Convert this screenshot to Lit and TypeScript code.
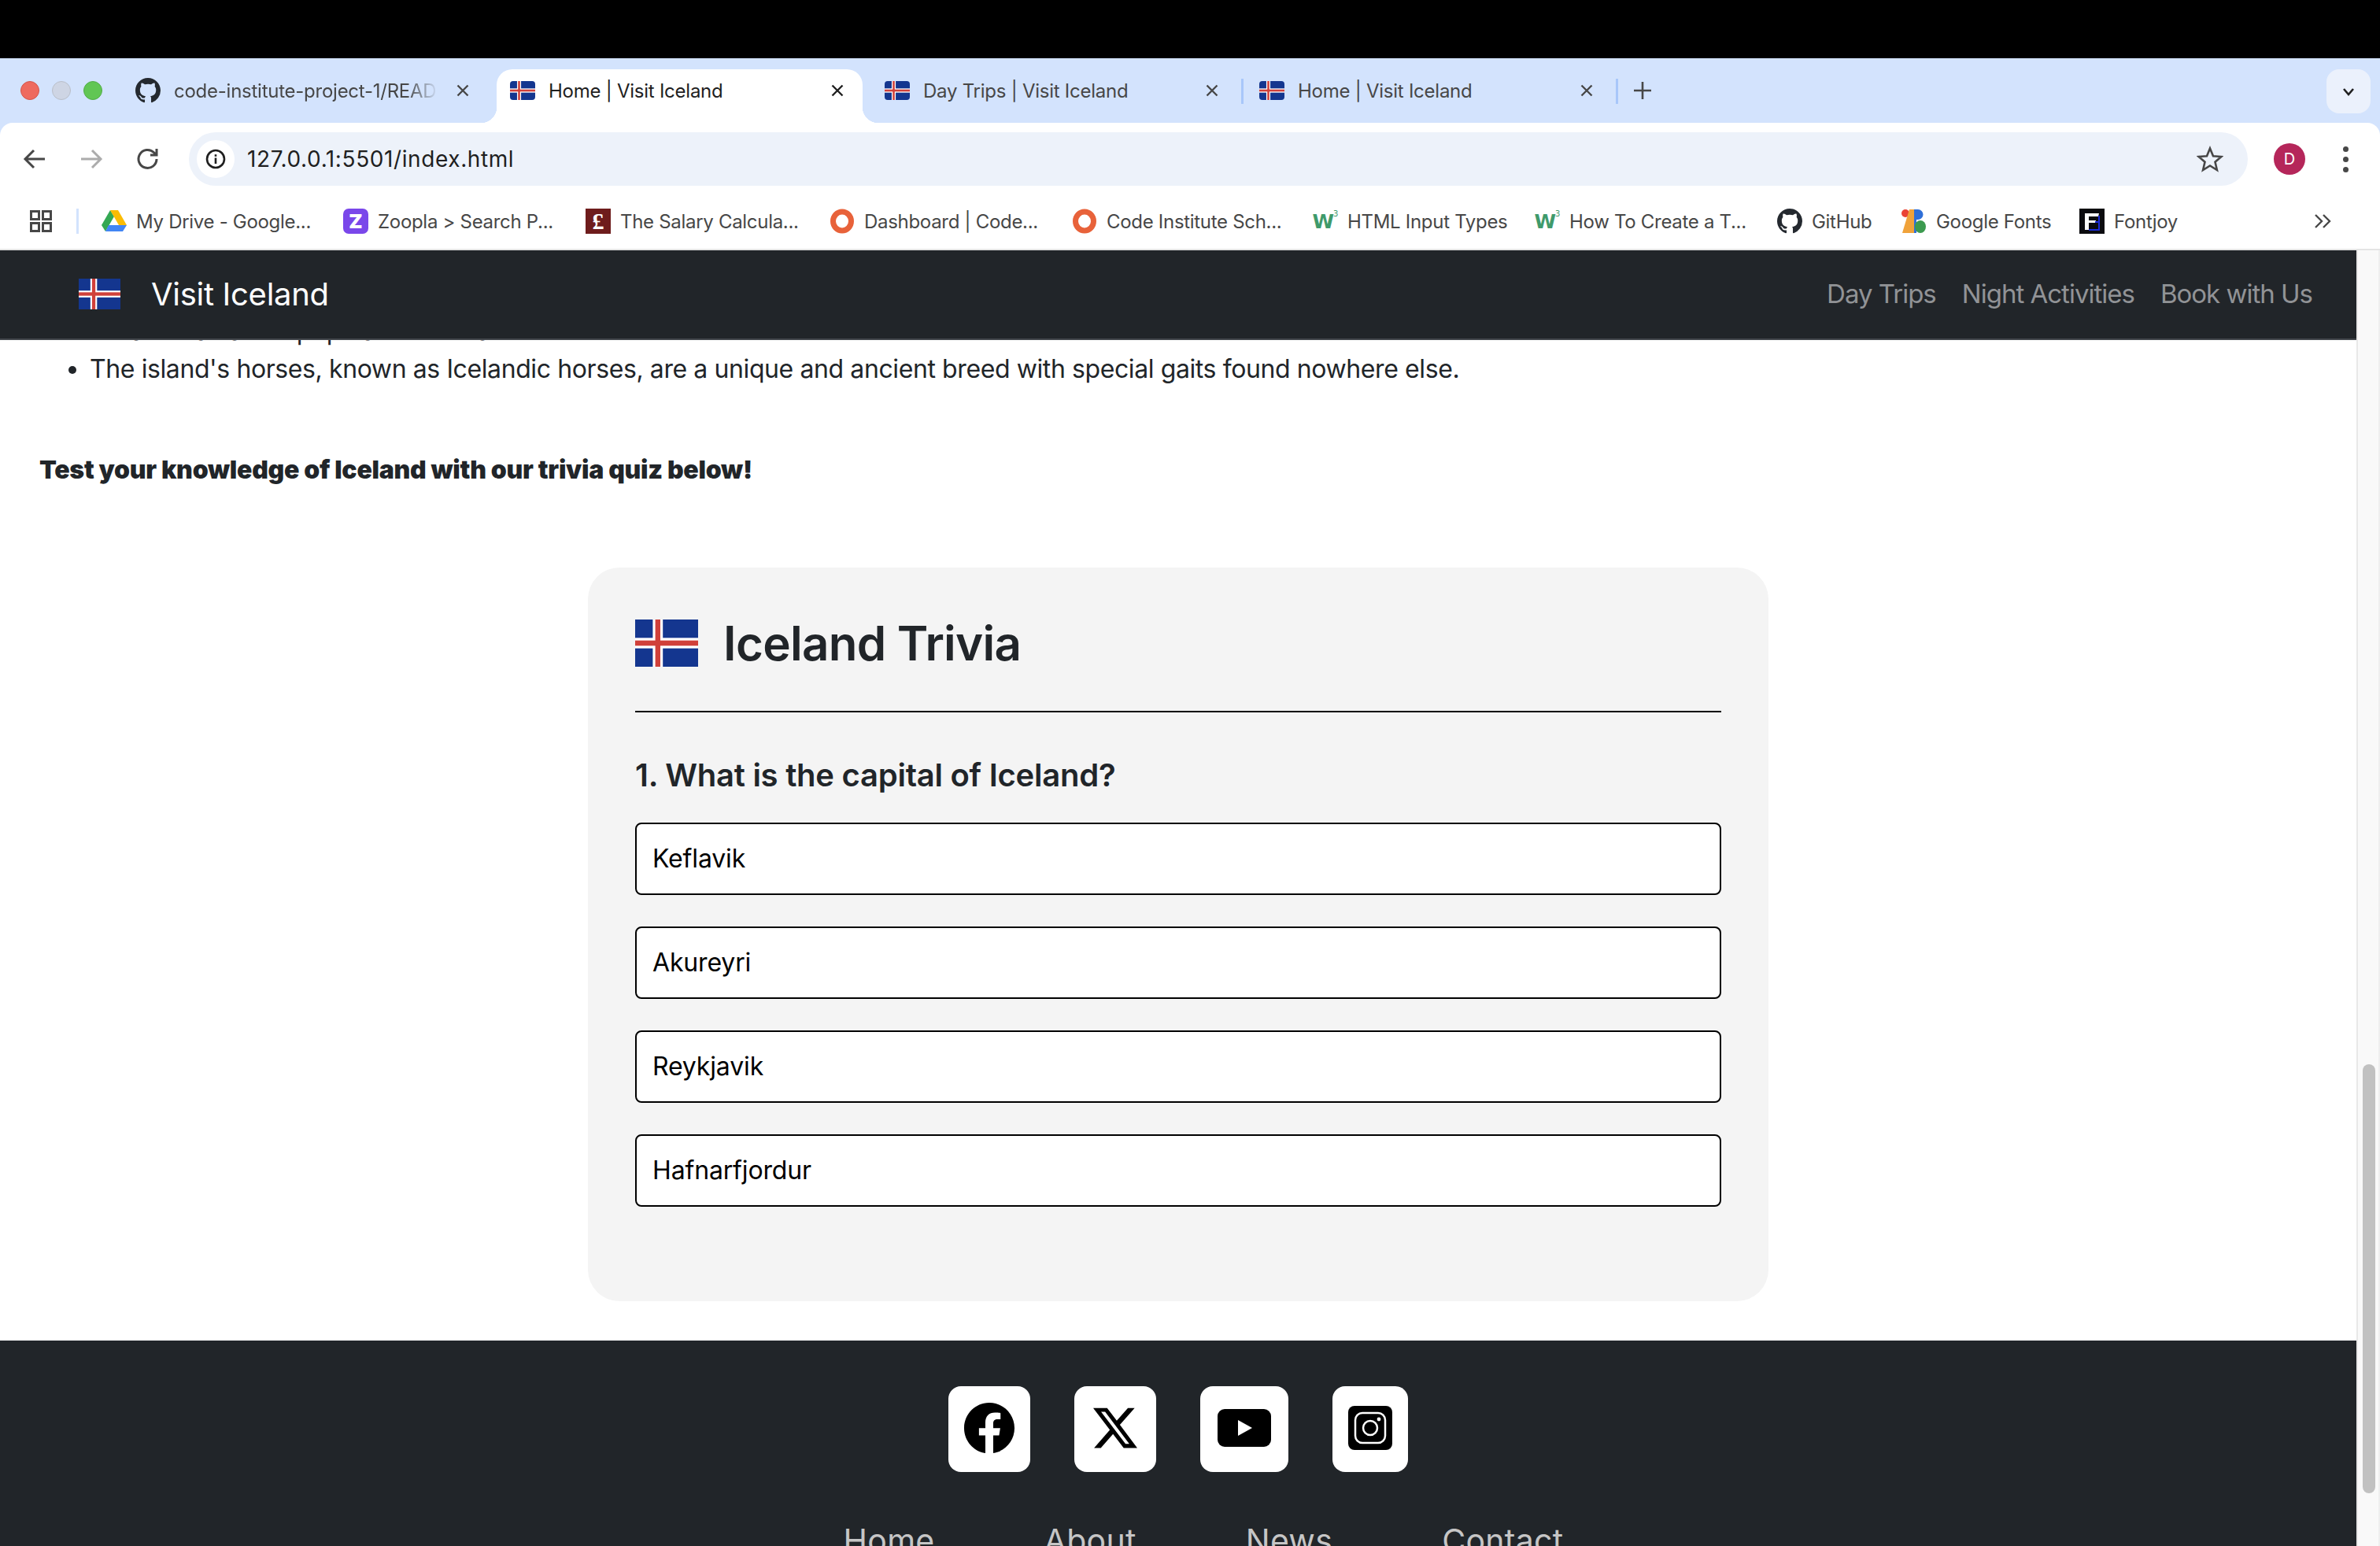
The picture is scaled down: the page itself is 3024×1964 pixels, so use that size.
import { LitElement, html, css } from "lit";
import { customElement } from "lit/decorators.js";

const GH_PATH =
  "M8 0C3.58 0 0 3.58 0 8c0 3.54 2.29 6.53 5.47 7.59.4.07.55-.17.55-.38 0-.19-.01-.82-.01-1.49-2.01.37-2.53-.49-2.69-.94-.09-.23-.48-.94-.82-1.13-.28-.15-.68-.52-.01-.53.63-.01 1.08.58 1.23.82.72 1.21 1.87.87 2.33.66.07-.52.28-.87.51-1.07-1.78-.2-3.64-.89-3.64-3.95 0-.87.31-1.59.82-2.15-.08-.2-.36-1.02.08-2.12 0 0 .67-.21 2.2.82.64-.18 1.32-.27 2-.27.68 0 1.36.09 2 .27 1.53-1.04 2.2-.82 2.2-.82.44 1.1.16 1.92.08 2.12.51.56.82 1.27.82 2.15 0 3.07-1.87 3.75-3.65 3.95.29.25.54.73.54 1.48 0 1.07-.01 1.93-.01 2.2 0 .21.15.46.55.38A8.013 8.013 0 0016 8c0-4.42-3.58-8-8-8z";

const ghIcon = () => html`<svg class="fav" viewBox="0 0 16 16"><path fill="#24292f" d=${GH_PATH} /></svg>`;

// flag of Iceland, rounded for the tab favicons
const flag = (cls: string, r = 0) => html`<svg class=${cls} viewBox="0 0 25 18" preserveAspectRatio="none">
  <defs><clipPath id="fc${r}"><rect width="25" height="18" rx=${r} /></clipPath></defs>
  <g clip-path="url(#fc${r})">
    <rect width="25" height="18" fill="#14368f" />
    <rect x="7" width="4" height="18" fill="#fff" />
    <rect y="7" width="25" height="4" fill="#fff" />
    <rect x="8" width="2" height="18" fill="#d0403a" />
    <rect y="8" width="25" height="2" fill="#d0403a" />
  </g>
</svg>`;

const ring = () => html`<svg class="fav" viewBox="0 0 32 32"><ellipse cx="16" cy="16" rx="11.5" ry="12" fill="none" stroke="#e8623a" stroke-width="7" /></svg>`;

const bookmarkIcons: Record<string, unknown> = {
  drive: html`<svg class="fav" viewBox="0 0 32 32">
    <path fill="#34a853" d="M11 2 0 21l5 8L16 10z" />
    <path fill="#fbbc04" d="M11 2h10l11 19H22z" />
    <path fill="#4285f4" d="M9 21h23l-5 8H5z" />
  </svg>`,
  zoopla: html`<span class="zoopla">Z</span>`,
  salary: html`<span class="salary">£</span>`,
  ring: ring(),
  w3: html`<span class="w3">W<sup>3</sup></span>`,
  gh: ghIcon(),
  gfonts: html`<svg class="fav" viewBox="0 0 32 32">
    <circle cx="5" cy="6" r="5" fill="#ea4335" />
    <path fill="#f0a23a" d="M10 1h6v30H1z" />
    <path fill="#2f6fd8" d="M16 1h5a6.500 6.500 0 0 1 0 13h-5z" />
    <path fill="#2f6fd8" d="M16 14h3v17h-3z" />
    <ellipse cx="24" cy="23" rx="7" ry="8" fill="#3c9a4f" />
  </svg>`,
  fontjoy: html`<svg class="fav" viewBox="0 0 32 32">
    <rect width="32" height="32" fill="#0b0b0f" />
    <path fill="#fff" d="M7 6h18l-1 4H12v5h9v3h-9v9H7z" />
    <path fill="none" stroke="#1b2bd8" stroke-width="2" d="M25 9v18H12M25 17h-5" />
  </svg>`,
};

const bookmarks = [
  { label: "My Drive - Google...", icon: "drive", x: 129 },
  { label: "Zoopla > Search P...", icon: "zoopla", x: 436 },
  { label: "The Salary Calcula...", icon: "salary", x: 744 },
  { label: "Dashboard | Code...", icon: "ring", x: 1054 },
  { label: "Code Institute Sch...", icon: "ring", x: 1362 },
  { label: "HTML Input Types", icon: "w3", x: 1668 },
  { label: "How To Create a T...", icon: "w3", x: 1950 },
  { label: "GitHub", icon: "gh", x: 2258 },
  { label: "Google Fonts", icon: "gfonts", x: 2416 },
  { label: "Fontjoy", icon: "fontjoy", x: 2642 },
];

const tabs = [
  { title: "code-institute-project-1/README.md", icon: "gh" },
  { title: "Home | Visit Iceland", icon: "flag", active: true },
  { title: "Day Trips | Visit Iceland", icon: "flag", sep: true },
  { title: "Home | Visit Iceland", icon: "flag", sep: true },
];

const answers = ["Keflavik", "Akureyri", "Reykjavik", "Hafnarfjordur"];
const footerLinks = ["Home", "About", "News", "Contact"];

@customElement("app-root")
export class AppRoot extends LitElement {
  static styles = css`
    :host {
      display: flex;
      flex-direction: column;
      width: 3024px;
      height: 1964px;
      overflow: hidden;
      background: #000;
      font-family: Inter, "Liberation Sans", sans-serif;
      color: #212529;
    }
    svg { display: block; flex: none; }

    /* browser chrome */
    .chrome { margin-top: 74px; background: #d3e3fd; flex: none; }
    .strip { display: flex; align-items: flex-end; height: 82px; }
    .lights { display: flex; gap: 16px; width: 155px; padding: 0 0 29px 26px; box-sizing: border-box; }
    .lights span { width: 24px; height: 24px; border-radius: 50%; box-sizing: border-box; border: 1px solid; }
    .lights .r { background: #ee6a5f; border-color: #d5554a; }
    .lights .y { background: #ced5e4; border-color: #b9bfc9; }
    .lights .g { background: #61c654; border-color: #52ad46; }

    .tab {
      position: relative;
      display: flex;
      align-items: center;
      width: 465px;
      height: 68px;
      margin-right: 11px;
      padding: 0 20px 14px 17px;
      box-sizing: border-box;
      gap: 17px;
      font-size: 24px;
      letter-spacing: -0.25px;
      color: #474747;
      white-space: nowrap;
    }
    .tab.active { background: #fff; color: #1f1f1f; border-radius: 20px 20px 0 0; }
    .tab.active::before, .tab.active::after {
      content: "";
      position: absolute;
      bottom: 0;
      width: 20px;
      height: 20px;
    }
    .tab.active::before { left: -20px; background: radial-gradient(circle at 0 0, transparent 20px, #fff 20.5px); }
    .tab.active::after { right: -20px; background: radial-gradient(circle at 100% 0, transparent 20px, #fff 20.5px); }
    .tab.sep::after {
      content: "";
      position: absolute;
      right: -8px;
      top: 12px;
      width: 3px;
      height: 32px;
      background: #a8c7fa;
    }
    .fav { width: 32px; height: 32px; }
    .tabflag { width: 32px; height: 24px; }
    .title { flex: 1; overflow: hidden; }
    .title.fade {
      -webkit-mask-image: linear-gradient(90deg, #000 88%, transparent 100%);
      mask-image: linear-gradient(90deg, #000 88%, transparent 100%);
      flex: none;
      width: 336px;
      margin-right: 2px;
    }
    .close { width: 24px; height: 24px; stroke: currentColor; stroke-width: 2.4; fill: none; }
    .plus { width: 24px; height: 24px; margin: 0 0 29px 16px; stroke: #474747; stroke-width: 2.6; }
    .dropdown {
      display: flex;
      align-items: center;
      justify-content: center;
      width: 56px;
      height: 56px;
      margin: 0 12px 12px auto;
      border-radius: 16px;
      background: #ebf1fc;
    }
    .dropdown svg { width: 20px; height: 20px; fill: none; stroke: #1f1f1f; stroke-width: 2.6; }

    .toolbar { background: #fff; border-radius: 16px 16px 0 0; }
    .navrow { display: flex; align-items: center; height: 92px; padding: 12px 40px 12px 24px; box-sizing: border-box; }
    .navbtn { width: 40px; height: 40px; margin-right: 32px; fill: none; stroke: #474747; stroke-width: 3; }
    .navbtn.off { stroke: #acacac; }
    .address {
      flex: 1;
      display: flex;
      align-items: center;
      height: 68px;
      padding: 0 32px 0 10px;
      box-sizing: border-box;
      background: #edf2fa;
      border-radius: 34px;
    }
    .chip {
      display: flex;
      align-items: center;
      justify-content: center;
      width: 48px;
      height: 48px;
      border-radius: 50%;
      background: #fff;
      margin-right: 16px;
    }
    .chip svg { width: 26px; height: 26px; }
    .url { flex: 1; font-size: 28px; letter-spacing: 0.6px; color: #1f1f1f; }
    .star { width: 34px; height: 34px; fill: none; stroke: #474747; stroke-width: 2.6; margin-right: -1px; }
    .avatar {
      display: flex;
      align-items: center;
      justify-content: center;
      width: 40px;
      height: 40px;
      margin-left: 33px;
      border-radius: 50%;
      background: #b5265a;
      color: #fff;
      font-size: 20px;
    }
    .dots { display: flex; flex-direction: column; gap: 6px; margin-left: 48px; }
    .dots span { width: 7px; height: 7px; border-radius: 50%; background: #474747; }

    .bookmarks {
      display: flex;
      align-items: center;
      height: 70px;
      padding: 0 0 2px 38px;
      box-sizing: border-box;
      border-bottom: 2px solid #e4e4e4;
      font-size: 24px;
      letter-spacing: -0.3px;
      color: #474747;
      white-space: nowrap;
    }
    .apps { width: 28px; height: 28px; margin-right: 31px; fill: none; stroke: #474747; stroke-width: 3; }
    .divider { width: 3px; height: 32px; margin-right: 29px; background: #d3e3fd; }
    .bm { display: flex; align-items: center; gap: 12px; flex: none; }
    .zoopla, .salary, .w3 {
      display: flex;
      align-items: center;
      justify-content: center;
      flex: none;
      width: 32px;
      height: 32px;
      color: #fff;
      letter-spacing: 0;
    }
    .zoopla { background: #7a47ea; border-radius: 7px; font-size: 25px; font-weight: 900; }
    .salary { background: #6e1c1c; font-family: "Liberation Serif", serif; font-size: 30px; font-weight: 700; }
    .w3 { color: #3f9a6b; font-size: 25px; font-family: "DejaVu Sans", sans-serif; font-weight: 700; align-items: flex-start; line-height: 34px; }
    .w3 sup { font-size: 10px; font-weight: 400; line-height: 14px; margin-left: -1px; }
    .more { width: 24px; height: 24px; margin-left: 45px; fill: none; stroke: #474747; stroke-width: 2.4; }

    /* page */
    .window { flex: 1; display: flex; min-height: 0; background: #fff; }
    .page { flex: 1; min-width: 0; display: flex; flex-direction: column; overflow: hidden; }
    .nav {
      position: relative;
      z-index: 1;
      flex: none;
      display: flex;
      align-items: center;
      height: 114px;
      padding: 0 56px 2px 100px;
      box-sizing: border-box;
      background: #212529;
      border-bottom: 2px solid #43474c;
    }
    .navflag { width: 53px; height: 39px; margin-right: 39px; }
    .brand { flex: 1; font-size: 40px; color: #fff; letter-spacing: -0.3px; }
    .links { display: flex; gap: 33px; font-size: 33px; color: #919396; letter-spacing: -1px; }

    .content { margin-top: -35px; font-size: 32px; line-height: 48px; letter-spacing: -0.4px; }
    .facts { margin: 0; padding: 0 0 0 114px; }
    .intro { margin: 80px 0 100px 50px; font-weight: 900; letter-spacing: -0.27px; }

    .card {
      width: 1500px;
      margin: 0 auto;
      padding: 66px 60px 120px;
      box-sizing: border-box;
      background: #f4f4f4;
      border-radius: 40px;
    }
    .cardhead { display: flex; align-items: center; gap: 32px; padding-bottom: 56px; border-bottom: 2px solid #000; }
    .cardflag { width: 80px; height: 60px; }
    .cardhead h1 { margin: 0; font-size: 60px; line-height: 60px; font-weight: 600; letter-spacing: -0.7px; }
    .question { margin: 50px 0 30px; font-size: 40px; line-height: 60px; font-weight: 600; letter-spacing: -0.25px; }
    .answers { display: flex; flex-direction: column; gap: 40px; }
    .answer {
      display: flex;
      align-items: center;
      height: 92px;
      padding: 0 20px;
      box-sizing: border-box;
      background: #fff;
      border: 2px solid #000;
      border-radius: 8px;
      color: #000;
      font-size: 32px;
      letter-spacing: -0.15px;
    }

    .footer { margin-top: 50px; padding-top: 58px; background: #212529; flex: 1; }
    .socials { display: flex; justify-content: center; gap: 56px; }
    .social {
      display: flex;
      align-items: center;
      justify-content: center;
      height: 109px;
      padding-bottom: 4px;
      box-sizing: border-box;
      background: #fff;
      border-radius: 16px;
    }
    .social.w104 { width: 104px; }
    .social.w112 { width: 112px; }
    .social.w96 { width: 96px; }
    .footlinks {
      display: flex;
      justify-content: center;
      gap: 139px;
      margin-top: 57px;
      padding-left: 64px;
      font-size: 41px;
      line-height: 60px;
      letter-spacing: 0.3px;
      color: #c6c6c6;
    }

    .scrollbar {
      flex: none;
      width: 30px;
      padding-left: 6px;
      box-sizing: border-box;
      background: #f9f9f9;
      border-left: 2px solid #e8e8e8;
      border-right: 2px solid #efefef;
    }
    .thumb { width: 16px; height: 545px; margin-top: 1034px; border-radius: 8px; background: #c1c1c1; }
  `;

  private closeIcon() {
    return html`<svg class="close" viewBox="0 0 24 24"><path d="M5.5 5.5l13 13M18.5 5.5l-13 13" /></svg>`;
  }

  private renderTab(t: (typeof tabs)[number]) {
    const fade = t.icon === "gh";
    return html`<div class="tab ${t.active ? "active" : ""} ${t.sep ? "sep" : ""}">
      ${fade ? ghIcon() : flag("tabflag", 3)}
      <span class="title ${fade ? "fade" : ""}">${t.title}</span>
      ${this.closeIcon()}
    </div>`;
  }

  private renderChrome() {
    return html`<div class="chrome">
      <div class="strip">
        <div class="lights"><span class="r"></span><span class="y"></span><span class="g"></span></div>
        ${tabs.map((t) => this.renderTab(t))}
        <svg class="plus" viewBox="0 0 24 24"><path d="M12 1v22M1 12h22" /></svg>
        <div class="dropdown"><svg viewBox="0 0 20 20"><path d="M4 7l6 7 6-7" /></svg></div>
      </div>
      <div class="toolbar">
        <div class="navrow">
          <svg class="navbtn" viewBox="0 0 40 40"><path d="M33 20H9M19 9L8 20l11 11" /></svg>
          <svg class="navbtn off" viewBox="0 0 40 40"><path d="M7 20h24M21 9l11 11-11 11" /></svg>
          <svg class="navbtn" viewBox="0 0 40 40"><path d="M31 20a11.5 11.5 0 1 1-3.4-8.2L31 15M31 7v8h-8" /></svg>
          <div class="address">
            <div class="chip">
              <svg viewBox="0 0 26 26">
                <circle cx="13" cy="13" r="11" fill="none" stroke="#1f1f1f" stroke-width="2.6" />
                <rect x="11.7" y="11.5" width="2.6" height="7.5" fill="#1f1f1f" />
                <rect x="11.7" y="7.2" width="2.6" height="2.6" fill="#1f1f1f" />
              </svg>
            </div>
            <span class="url">127.0.0.1:5501/index.html</span>
            <svg class="star" viewBox="0 0 34 34"><path d="M17 3.5l4 9.7 10.4.8-7.9 6.8 2.4 10.2L17 25.5 8.100 31l2.400-10.200-7.900-6.800 10.400-.8z" /></svg>
          </div>
          <div class="avatar">D</div>
          <div class="dots"><span></span><span></span><span></span></div>
        </div>
        <div class="bookmarks">
          <svg class="apps" viewBox="0 0 28 28">
            <rect x="1.500" y="1.500" width="10" height="10" /><rect x="16.500" y="1.500" width="10" height="10" />
            <rect x="1.500" y="16.500" width="10" height="10" /><rect x="16.500" y="16.500" width="10" height="10" />
          </svg>
          <div class="divider"></div>
          ${bookmarks.map((b, i) => {
            const next = bookmarks[i + 1] ? bookmarks[i + 1].x : 2894;
            return html`<div class="bm" style="width:${next - b.x}px">${bookmarkIcons[b.icon]}<span>${b.label}</span></div>`;
          })}
          <svg class="more" viewBox="0 0 24 24"><path d="M3 4l8 8-8 8M13 4l8 8-8 8" /></svg>
        </div>
      </div>
    </div>`;
  }

  private renderSocials() {
    return html`<div class="socials">
      <div class="social w104">
        <svg width="64" height="64" viewBox="0 0 16 16"><path d="M16 8.049c0-4.446-3.582-8.05-8-8.05C3.58 0-.002 3.603-.002 8.05c0 4.017 2.926 7.347 6.75 7.951v-5.625h-2.030V8.050H6.750V6.275c0-2.017 1.195-3.131 3.022-3.131.876 0 1.791.157 1.791.157v1.980h-1.009c-.993 0-1.303.621-1.303 1.258v1.510h2.218l-.354 2.326H9.250V16c3.824-.604 6.750-3.934 6.750-7.951" /></svg>
      </div>
      <div class="social w104">
        <svg width="56" height="58" viewBox="0 0 16 16"><path d="M12.600.750h2.454l-5.360 6.142L16 15.250h-4.937l-3.867-5.070-4.425 5.070H.316l5.733-6.570L0 .750h5.063l3.495 4.633L12.601.750Zm-.860 13.028h1.360L4.323 2.145H2.865z" /></svg>
      </div>
      <div class="social w112">
        <svg width="68" height="48" viewBox="0 0 68 48">
          <rect width="68" height="48" rx="9" />
          <path fill="#fff" d="M26 14l18 10-18 10z" />
        </svg>
      </div>
      <div class="social w96">
        <svg width="56" height="56" viewBox="0 0 56 56">
          <rect width="56" height="56" rx="8" />
          <rect x="9" y="9" width="38" height="38" rx="9" fill="none" stroke="#fff" stroke-width="2.500" />
          <circle cx="28" cy="28" r="9" fill="none" stroke="#fff" stroke-width="2.500" />
          <circle cx="39" cy="17" r="2.400" fill="#fff" />
        </svg>
      </div>
    </div>`;
  }

  render() {
    return html`
      ${this.renderChrome()}
      <div class="window">
        <div class="page">
          <div class="nav">
            ${flag("navflag")}
            <span class="brand">Visit Iceland</span>
            <div class="links"><span>Day Trips</span><span>Night Activities</span><span>Book with Us</span></div>
          </div>
          <div class="content">
            <ul class="facts">
              <li>Iceland has a low population overall.</li>
              <li>The island's horses, known as Icelandic horses, are a unique and ancient breed with special gaits found nowhere else.</li>
            </ul>
            <p class="intro">Test your knowledge of Iceland with our trivia quiz below!</p>
            <div class="card">
              <div class="cardhead">
                ${flag("cardflag")}
                <h1>Iceland Trivia</h1>
              </div>
              <div class="question">1. What is the capital of Iceland?</div>
              <div class="answers">${answers.map((a) => html`<div class="answer">${a}</div>`)}</div>
            </div>
          </div>
          <div class="footer">
            ${this.renderSocials()}
            <div class="footlinks">${footerLinks.map((l) => html`<span>${l}</span>`)}</div>
          </div>
        </div>
        <div class="scrollbar"><div class="thumb"></div></div>
      </div>
    `;
  }
}
